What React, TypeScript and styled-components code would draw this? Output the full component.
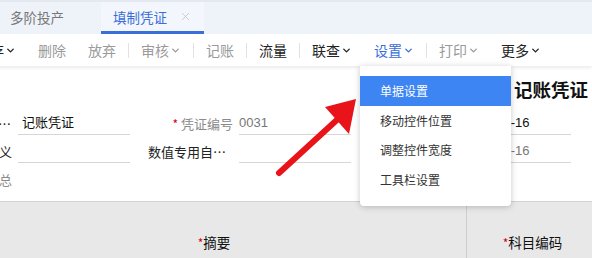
import styled, { createGlobalStyle } from "styled-components";
import { ChevronDown, X } from "lucide-react";

const GlobalStyle = createGlobalStyle`
  html, body {
    margin: 0;
    padding: 0;
    background: #ffffff;
  }
  body {
    font-family: "Noto Sans CJK SC", "Liberation Sans", sans-serif;
    color: #222;
  }
`;

type ToolItem = { label: string; menu?: boolean; tone: "off" | "on" | "active"; sep?: boolean };

const tools: ToolItem[] = [
  { label: "保存", menu: true, tone: "on" },
  { label: "删除", tone: "off" },
  { label: "放弃", tone: "off", sep: true },
  { label: "审核", menu: true, tone: "off", sep: true },
  { label: "记账", tone: "off", sep: true },
  { label: "流量", tone: "on", sep: true },
  { label: "联查", menu: true, tone: "on" },
  { label: "设置", menu: true, tone: "active", sep: true },
  { label: "打印", menu: true, tone: "off" },
  { label: "更多", menu: true, tone: "on" },
];

const menuItems = ["单据设置", "移动控件位置", "调整控件宽度", "工具栏设置"];

const App = () => {
  return (
    <Page>
      <GlobalStyle />
      <TabBar>
        <Tab>多阶投产</Tab>
        <Tab active>
          填制凭证
          <X size={13} strokeWidth={1.5} />
        </Tab>
      </TabBar>

      <Toolbar>
        {tools.map((t) => (
          <ToolGroup key={t.label}>
            <ToolButton tone={t.tone}>
              {t.label}
              {t.menu && <ChevronDown size={11} strokeWidth={3} />}
            </ToolButton>
            {t.sep && <Separator />}
          </ToolGroup>
        ))}
      </Toolbar>

      <Form>
        <TitleRow>
          <Title>记账凭证</Title>
        </TitleRow>
        <FormRow>
          <Field>
            <Label width={40}>凭证类别</Label>
            <Input width={112} indent={4}>记账凭证</Input>
          </Field>
          <Field>
            <Label width={85} muted>
              <Star>*</Star> 凭证编号
            </Label>
            <Input width={112} muted>0031</Input>
          </Field>
          <Field>
            <Label width={88}>制单日期</Label>
            <Input width={108}>2019-05-16</Input>
          </Field>
        </FormRow>
        <FormRow>
          <Field>
            <Label width={40}>自定义</Label>
            <Input width={112} indent={4} />
          </Field>
          <Field>
            <Label width={85}>数值专用自定义项</Label>
            <Input width={112} />
          </Field>
          <Field>
            <Label width={88}>业务日期</Label>
            <Input width={108} muted>2019-05-16</Input>
          </Field>
        </FormRow>
        <FormRow>
          <Field>
            <Label width={40} muted>汇总</Label>
          </Field>
        </FormRow>
      </Form>

      <GridHeader>
        <HeadCell>
          <Star>*</Star>摘要
        </HeadCell>
        <HeadCell divider>
          <Star>*</Star>科目编码
        </HeadCell>
      </GridHeader>

      <Menu>
        {menuItems.map((m, i) => (
          <MenuItem key={m} selected={i === 0}>
            {m}
          </MenuItem>
        ))}
      </Menu>

      <Pointer width="592" height="258" viewBox="0 0 592 258">
        <line x1="279" y1="173" x2="339" y2="118" stroke="#e8141a" strokeWidth="6" strokeLinecap="round" />
        <polygon points="356,99 325,107 349,134" fill="#e8141a" />
      </Pointer>
    </Page>
  );
};

export default App;

const Page = styled.div`
  position: relative;
  width: 592px;
  height: 258px;
  overflow: hidden;
  background: #fff;
`;

const TabBar = styled.div`
  display: flex;
  align-items: stretch;
  height: 34px;
  box-sizing: border-box;
  background: #eef2f9;
  border-top: 2px solid #e4e8ef;
  padding-left: 10px;
  gap: 37px;
`;

const Tab = styled.div<{ active?: boolean }>`
  display: flex;
  align-items: center;
  gap: 12px;
  padding: 0 ${({ active }) => (active ? "12px" : "0")};
  font-size: 13.5px;
  color: ${({ active }) => (active ? "#3a6ed8" : "#777")};
  border-bottom: 3px solid ${({ active }) => (active ? "#3a6ed8" : "transparent")};
  background: ${({ active }) => (active ? "#f3f6fc" : "transparent")};

  svg {
    color: #c2c6cc;
  }
`;

const Toolbar = styled.div`
  position: relative;
  display: flex;
  align-items: center;
  height: 32px;
  margin-left: -35px;
  background: #fff;
  box-shadow: 0 2px 3px rgba(0, 0, 0, 0.08);
  z-index: 1;
`;

const ToolGroup = styled.div`
  display: flex;
  align-items: center;
`;

const toneColor = { off: "#9a9a9a", on: "#222", active: "#3a6ed8" };

const ToolButton = styled.div<{ tone: "off" | "on" | "active" }>`
  display: flex;
  align-items: center;
  gap: 1px;
  padding: 0 11px;
  font-size: 14px;
  line-height: 20px;
  color: ${({ tone }) => toneColor[tone]};

  svg {
    margin-top: 1px;
    color: ${({ tone }) => toneColor[tone]};
  }
`;

const Separator = styled.span`
  width: 1px;
  height: 15px;
  margin: 0 1px;
  background: #e2e2e2;
`;

const Form = styled.div`
  height: 135px;
  box-sizing: border-box;
  padding-bottom: 8px;
  background: #fff;
`;

const TitleRow = styled.div`
  display: flex;
  justify-content: flex-end;
  align-items: center;
  height: 43px;
  padding: 3px 4px 0 0;
  box-sizing: border-box;
`;

const Title = styled.h1`
  margin: 0;
  font-size: 18.5px;
  font-weight: 700;
  color: #111;
  letter-spacing: 0;
`;

const FormRow = styled.div`
  display: flex;
  align-items: center;
  height: 28px;
  margin-left: -28px;
  gap: 18px;
`;

const Field = styled.div`
  display: flex;
  align-items: center;
  gap: 6px;
`;

const Label = styled.div<{ width: number; muted?: boolean }>`
  width: ${({ width }) => width}px;
  font-size: 13px;
  text-align: right;
  white-space: nowrap;
  overflow: hidden;
  text-overflow: ellipsis;
  color: ${({ muted }) => (muted ? "#8a8a8a" : "#222")};
`;

const Input = styled.div<{ width: number; indent?: number; muted?: boolean }>`
  width: ${({ width }) => width}px;
  height: 24px;
  box-sizing: border-box;
  padding-left: ${({ indent }) => indent ?? 0}px;
  border-bottom: 1px solid #d6d6d6;
  font-size: 13px;
  line-height: 24px;
  font-family: "Liberation Sans", "Noto Sans CJK SC", sans-serif;
  color: ${({ muted }) => (muted ? "#777" : "#111")};
  white-space: nowrap;
`;

const Star = styled.span`
  color: #d0021b;
  font-size: 12px;
`;

const GridHeader = styled.div`
  display: grid;
  grid-template-columns: 504px 132px;
  height: 80px;
  margin-left: -38px;
  background: #e8e8e8;
  border-top: 1px solid #d2d2d2;
`;

const HeadCell = styled.div<{ divider?: boolean }>`
  display: flex;
  align-items: center;
  justify-content: center;
  font-size: 13.5px;
  color: #111;
  border-left: ${({ divider }) => (divider ? "1px solid #cfcfcf" : "none")};
`;

const Menu = styled.div`
  position: absolute;
  left: 360px;
  top: 66px;
  width: 151px;
  height: 140px;
  box-sizing: border-box;
  padding-top: 10px;
  background: #fff;
  border-radius: 0 0 4px 4px;
  box-shadow: 0 1px 6px rgba(0, 0, 0, 0.22);
  z-index: 2;
`;

const MenuItem = styled.div<{ selected?: boolean }>`
  height: 29.5px;
  display: flex;
  align-items: center;
  padding-left: 20px;
  font-size: 12px;
  color: ${({ selected }) => (selected ? "#fff" : "#333")};
  background: ${({ selected }) => (selected ? "#3c85f3" : "transparent")};
`;

const Pointer = styled.svg`
  position: absolute;
  left: 0;
  top: 0;
  z-index: 3;
  pointer-events: none;
`;
